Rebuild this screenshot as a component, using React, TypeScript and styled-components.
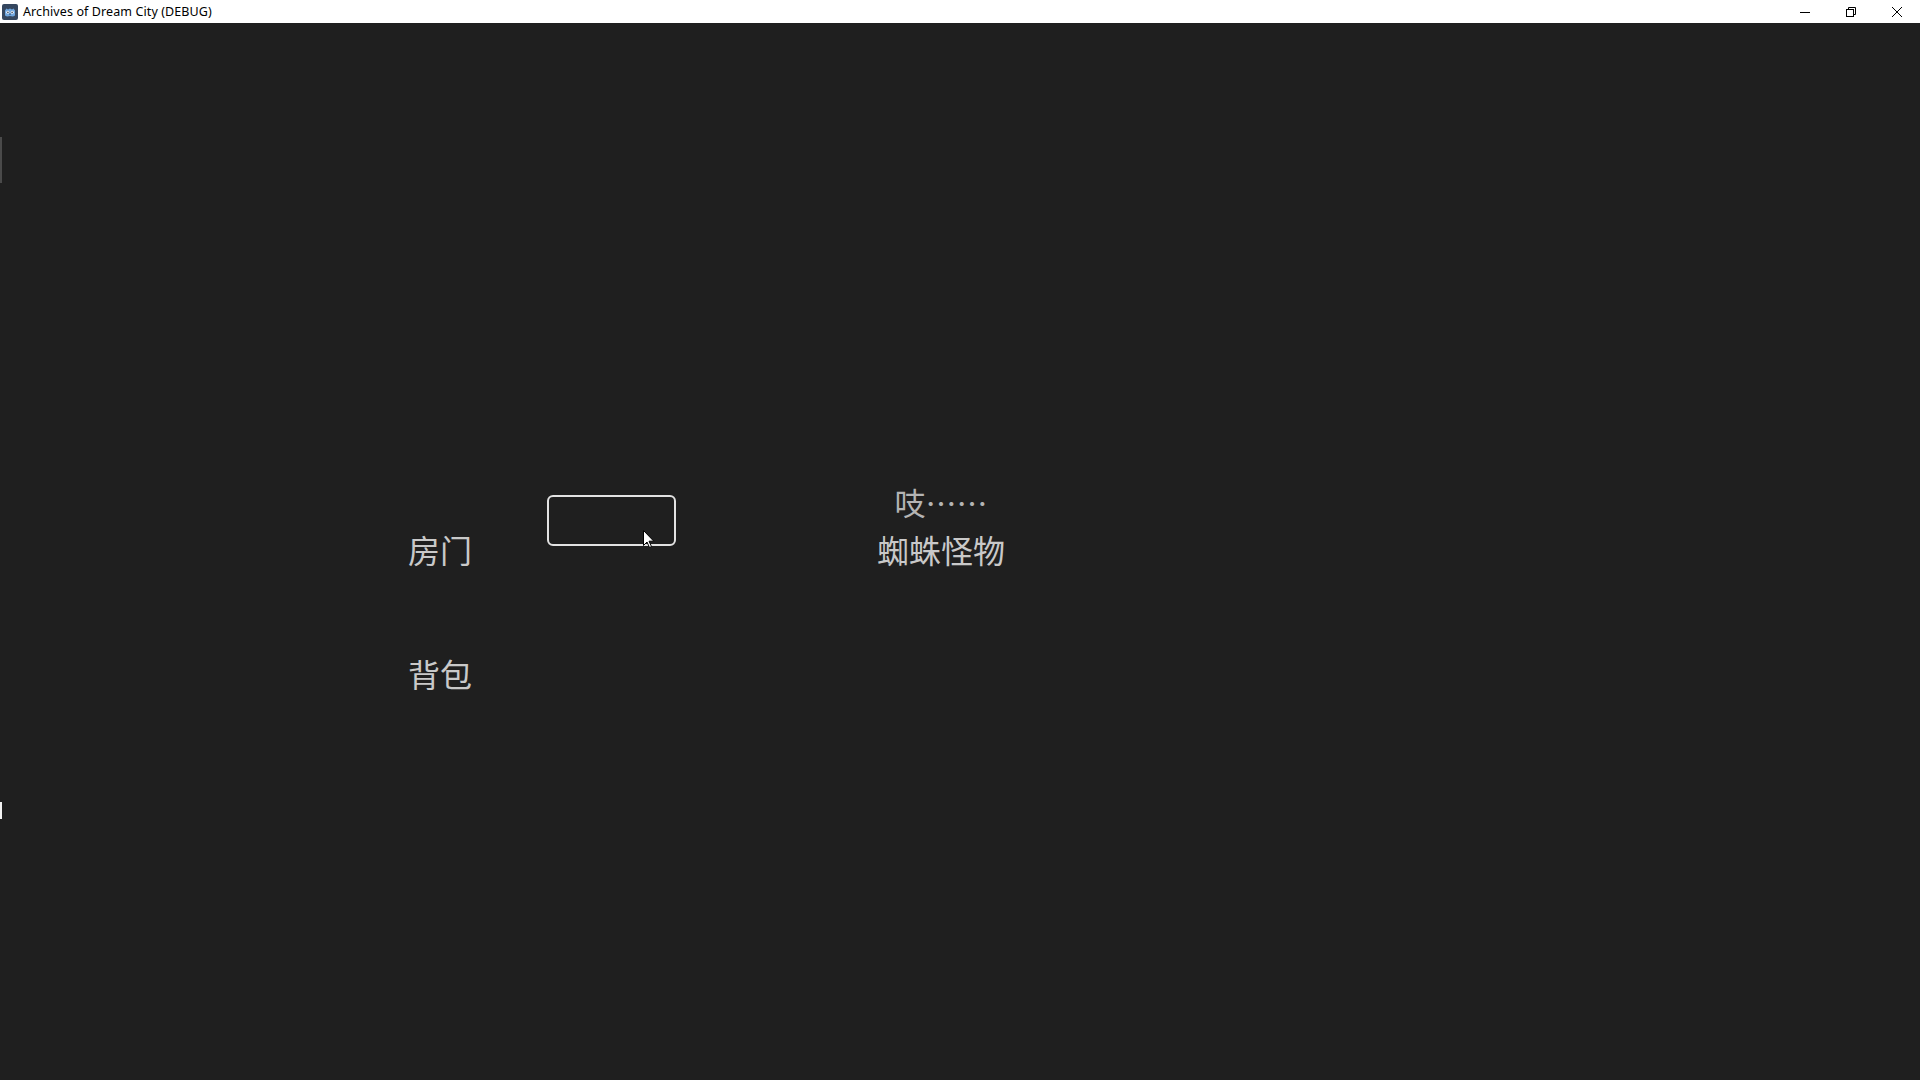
import React from "react";
import styled, { createGlobalStyle } from "styled-components";

const Global = createGlobalStyle`
  html, body { margin: 0; padding: 0; background: #1f1f1f; }
  body { width: 1920px; height: 1080px; overflow: hidden; }
  #root { width: 1920px; height: 1080px; }
`;

const Window = styled.div`
  position: relative;
  width: 1920px;
  height: 1080px;
  display: flex;
  flex-direction: column;
  background: #1f1f1f;
  font-family: "Noto Sans CJK SC", "Noto Sans", sans-serif;
`;

const TitleBar = styled.div`
  height: 23px;
  flex: none;
  background: #ffffff;
  display: flex;
  align-items: center;
  padding-left: 2px;
  font-family: "Noto Sans", "Liberation Sans", sans-serif;
  font-size: 12.5px;
  color: #000;
`;

const TitleText = styled.span`
  margin-left: 5px;
  line-height: 23px;
  letter-spacing: 0.1px;
`;

const Controls = styled.div`
  margin-left: auto;
  display: flex;
  height: 100%;
`;

const CtrlButton = styled.div`
  width: 46px;
  height: 23px;
  display: flex;
  align-items: center;
  justify-content: center;
`;

const Canvas = styled.div`
  flex: 1;
  position: relative;
  background: #1f1f1f;
`;

const Scene = styled.div`
  display: flex;
  align-items: flex-start;
  padding: 464px 0 0 408px;
`;

const LeftColumn = styled.div`
  display: flex;
  flex-direction: column;
  width: 64px;
`;

const Label = styled.div<{ $top: number }>`
  margin-top: ${(p) => p.$top}px;
  font-size: 32px;
  line-height: 32px;
  color: #c9c9c9;
  white-space: nowrap;
`;

const InputBox = styled.div`
  box-sizing: border-box;
  margin: 8px 0 0 75px;
  width: 129px;
  height: 51px;
  border: 2px solid #e2e2e2;
  border-radius: 6px;
`;

const DialogColumn = styled.div`
  margin-left: 185px;
  width: 160px;
  display: flex;
  flex-direction: column;
  align-items: center;
`;

const Speech = styled.div`
  font-size: 31px;
  line-height: 30px;
  color: #b4b4b4;
  white-space: nowrap;
`;

const Speaker = styled.div`
  margin-top: 16px;
  font-size: 32px;
  line-height: 32px;
  color: #c9c9c9;
  white-space: nowrap;
`;

const Cursor = styled.svg`
  position: absolute;
  left: 643px;
  top: 507px;
`;

const EdgeMark = styled.div<{ $top: number; $h: number; $c: string }>`
  position: absolute;
  left: 0;
  top: ${(p) => p.$top}px;
  width: 2px;
  height: ${(p) => p.$h}px;
  background: ${(p) => p.$c};
`;

const GodotIcon = () => (
  <svg width="16" height="16" viewBox="0 0 16 16">
    <rect x="0" y="0" width="16" height="16" rx="2" fill="#35475f" />
    <path
      d="M3 6.5 L4.5 4.5 L6 5.5 L8 4.5 L10 5.5 L11.5 4.5 L13 6.5 L13 11.5 L11 12.5 L8 12 L5 12.5 L3 11.5 Z"
      fill="#6fa7e0"
    />
    <circle cx="5.8" cy="8.3" r="1.5" fill="#fff" />
    <circle cx="10.2" cy="8.3" r="1.5" fill="#fff" />
    <circle cx="5.9" cy="8.4" r="0.8" fill="#35475f" />
    <circle cx="10.1" cy="8.4" r="0.8" fill="#35475f" />
    <rect x="7.5" y="9.5" width="1" height="1.6" fill="#35475f" />
  </svg>
);

export default function App() {
  return (
    <>
      <Global />
      <Window>
        <TitleBar>
          <GodotIcon />
          <TitleText>Archives of Dream City (DEBUG)</TitleText>
          <Controls>
            <CtrlButton>
              <svg width="12" height="12" viewBox="0 0 12 12">
                <line x1="1" y1="6.5" x2="11" y2="6.5" stroke="#000" strokeWidth="1" />
              </svg>
            </CtrlButton>
            <CtrlButton>
              <svg width="12" height="12" viewBox="0 0 12 12">
                <rect x="1.5" y="3.5" width="7" height="7" fill="none" stroke="#000" strokeWidth="1" />
                <path d="M3.5 3.5 V1.5 H10.5 V8.5 H8.5" fill="none" stroke="#000" strokeWidth="1" />
              </svg>
            </CtrlButton>
            <CtrlButton>
              <svg width="12" height="12" viewBox="0 0 12 12">
                <path d="M1 1 L11 11 M11 1 L1 11" stroke="#000" strokeWidth="1" />
              </svg>
            </CtrlButton>
          </Controls>
        </TitleBar>
        <Canvas>
          <Scene>
            <LeftColumn>
              <Label $top={46}>房门</Label>
              <Label $top={92}>背包</Label>
            </LeftColumn>
            <InputBox />
            <DialogColumn>
              <Speech>吱……</Speech>
              <Speaker>蜘蛛怪物</Speaker>
            </DialogColumn>
          </Scene>
          <EdgeMark $top={114} $h={46} $c="#4a4a4a" />
          <EdgeMark $top={779} $h={17} $c="#f2f2f2" />
          <Cursor width="12" height="19" viewBox="0 0 12 19">
            <path d="M0.5 0.5 L0.5 15.5 L4 12 L6.5 17.5 L8.5 16.5 L6 11.2 L10.8 11.2 Z" fill="#fff" stroke="#000" strokeWidth="1" />
          </Cursor>
        </Canvas>
      </Window>
    </>
  );
}
